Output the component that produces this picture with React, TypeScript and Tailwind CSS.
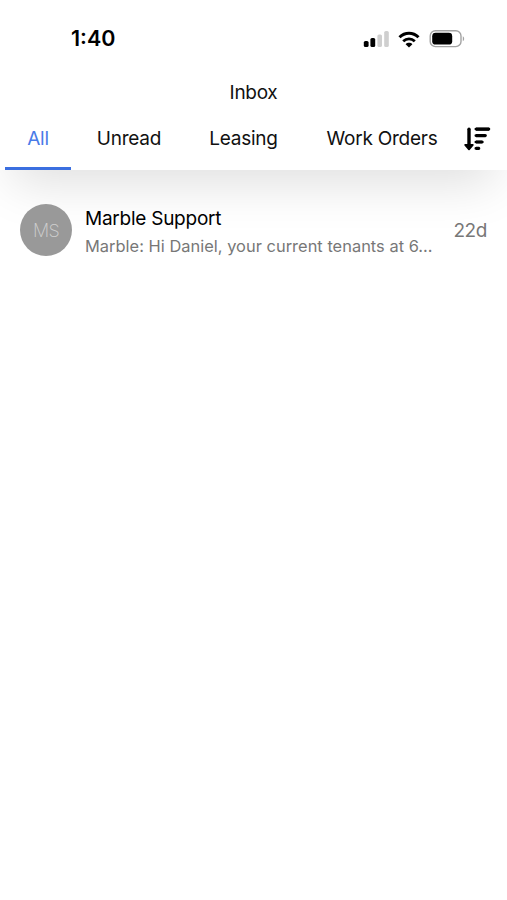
import { useState } from "react";

const tabs = [
  { label: "All", width: "w-[66px]" },
  { label: "Unread", width: "w-[116px]" },
  { label: "Leasing", width: "w-[113px]" },
  { label: "Work Orders", width: "w-[164px]" },
];

const threads = [
  {
    initials: "MS",
    name: "Marble Support",
    preview: "Marble: Hi Daniel, your current tenants at 6...",
    age: "22d",
  },
];

const StatusBar = () => (
  <div className="flex h-[76px] items-center justify-between pt-[2px] pl-[71px] pr-[42px]">
    <span className="text-[21.5px] font-semibold leading-none text-black">1:40</span>
    <div className="flex items-center">
      <svg width="26" height="18" viewBox="0 0 26 18" className="mr-[9px]">
        <rect x=".8" y="11" width="4.8" height="6" rx="1.6" fill="#000" />
        <rect x="7.4" y="8" width="4.8" height="9" rx="1.6" fill="#000" />
        <rect x="14.4" y="4.5" width="4.6" height="12.5" rx="1.6" fill="#cfcfcf" />
        <rect x="21.2" y="1" width="4.6" height="16" rx="1.6" fill="#cfcfcf" />
      </svg>
      <svg width="22" height="17" viewBox="0 0 22 17" fill="none" className="mr-[9px]">
        <path d="M1.5 6.2C7 .8 15 .8 20.5 6.2" stroke="#000" strokeWidth="3" />
        <path d="M5.2 10.2C8.6 7 13.4 7 16.8 10.2" stroke="#000" strokeWidth="2.8" />
        <path d="M11 16.5L7.6 13.2c1.8-1.8 5-1.8 6.8 0z" fill="#000" />
      </svg>
      <svg width="36" height="18" viewBox="0 0 36 18" fill="none">
        <rect x="1.2" y=".8" width="30.8" height="15.8" rx="5.2" stroke="#a3a3a3" strokeWidth="1.4" />
        <rect x="3.2" y="2.8" width="20" height="11.8" rx="3.4" fill="#000" />
        <path d="M33.8 6.2c1.8.8 1.8 4.2 0 5z" fill="#a3a3a3" />
      </svg>
    </div>
  </div>
);

const SortIcon = () => (
  <svg width="27" height="25" viewBox="0 0 27 25" fill="none" stroke="#000">
    <path d="M5 2.2v17" strokeWidth="3.4" strokeLinecap="round" />
    <path d="M1.2 18h7.6L5 22.4z" fill="#000" strokeWidth="1.8" strokeLinejoin="round" />
    <path d="M12 2.1h13.2M12 8.6h9.6M12 15h6.4M12 21.4h3.2" strokeWidth="3.2" strokeLinejoin="round" />
    <path d="M11.8 2.1h13.2M11.8 8.6h9.8M11.8 15h6.6M11.8 21.4h3.2" strokeWidth="2.6" strokeLinecap="round" />
  </svg>
);

const App = () => {
  const [active, setActive] = useState("All");

  return (
    <div className="flex min-h-[900px] w-full flex-col overflow-hidden bg-white font-['Inter',sans-serif]">
      <header className="flex h-[170px] flex-col bg-white shadow-[0_25px_50px_-12px_rgba(0,0,0,0.13)]">
        <StatusBar />
        <h1 className="flex h-8 items-center justify-center text-[19px] leading-none tracking-[-0.3px] text-[#111]">
          Inbox
        </h1>
        <nav className="flex flex-1 pl-[5px]">
          {tabs.map((tab) => (
            <button
              key={tab.label}
              onClick={() => setActive(tab.label)}
              className={`flex h-full items-center justify-center border-b-[3px] pt-px text-[19px] leading-none tracking-[-0.25px] whitespace-nowrap ${tab.width} ${
                active === tab.label ? "border-[#3b6fe0] text-[#4a7be8]" : "border-transparent text-[#111]"
              }`}
            >
              {tab.label}
            </button>
          ))}
          <button aria-label="Sort" className="flex items-center">
            <SortIcon />
          </button>
        </nav>
      </header>
      <main className="pt-[33px]">
        {threads.map((thread) => (
          <div key={thread.name} className="flex items-center px-5">
            <div className="mb-[3px] flex size-[52px] shrink-0 items-center justify-center rounded-full bg-[#999] text-[18px] font-extralight tracking-[-0.6px] text-[#d0d0d0]">
              {thread.initials}
            </div>
            <div className="ml-[13px] flex flex-1 flex-col">
              <span className="pt-[2px] text-[19px] leading-7 tracking-[-0.25px] text-black">{thread.name}</span>
              <span className="-mt-px text-[16.4px] leading-7 tracking-[0.03px] whitespace-nowrap text-[#777]">
                {thread.preview}
              </span>
            </div>
            <span className="text-[19px] tracking-[-0.4px] text-[#777]">{thread.age}</span>
          </div>
        ))}
      </main>
    </div>
  );
};

export default App;
